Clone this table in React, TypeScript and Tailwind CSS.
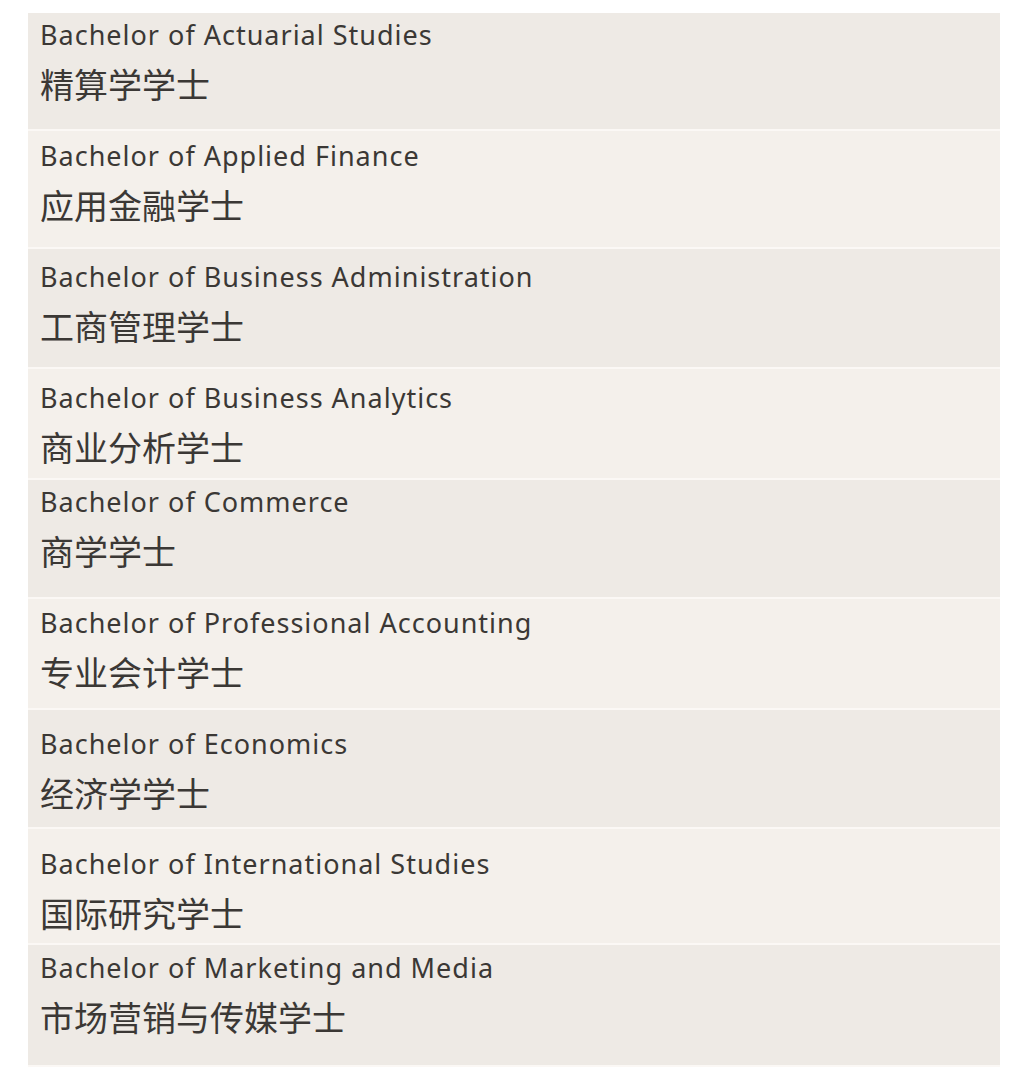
const rows = [
  { en: "Bachelor of Actuarial Studies", zh: "精算学学士", cls: "h-[118px] pt-[4px] bg-[#eeeae5]" },
  { en: "Bachelor of Applied Finance", zh: "应用金融学士", cls: "h-[118px] pt-[7px] bg-[#f4f0eb]" },
  { en: "Bachelor of Business Administration", zh: "工商管理学士", cls: "h-[120px] pt-[10px] bg-[#eeeae5]" },
  { en: "Bachelor of Business Analytics", zh: "商业分析学士", cls: "h-[111px] pt-[11px] bg-[#f4f0eb]" },
  { en: "Bachelor of Commerce", zh: "商学学士", cls: "h-[119px] pt-[4px] bg-[#eeeae5]" },
  { en: "Bachelor of Professional Accounting", zh: "专业会计学士", cls: "h-[111px] pt-[6px] bg-[#f4f0eb]" },
  { en: "Bachelor of Economics", zh: "经济学学士", cls: "h-[119px] pt-[16px] bg-[#eeeae5]" },
  { en: "Bachelor of International Studies", zh: "国际研究学士", cls: "h-[116px] pt-[17px] bg-[#f4f0eb]" },
  { en: "Bachelor of Marketing and Media", zh: "市场营销与传媒学士", cls: "h-[122px] pt-[5px] bg-[#eeeae5] border-b-0" },
];

export default function App() {
  return (
    <div className="min-h-[1086px] w-[1028px] bg-white pl-[28px] pt-[13px]">
      <div className="w-[972px] flex flex-col">
        {rows.map((r) => (
          <div
            key={r.en}
            className={`box-border flex flex-col border-b-2 border-[#fbf8f5] pl-[12px] text-[#3b3835] ${r.cls}`}
          >
            <div
              className="text-[27px] leading-[36px] tracking-[1px]"
              style={{ fontFamily: '"Noto Sans", "Noto Sans CJK SC", sans-serif' }}
            >
              {r.en}
            </div>
            <div
              className="mt-[9px] text-[34px] leading-[44px]"
              style={{ fontFamily: '"Noto Sans CJK SC", "Noto Sans", sans-serif' }}
            >
              {r.zh}
            </div>
          </div>
        ))}
      </div>
    </div>
  );
}
